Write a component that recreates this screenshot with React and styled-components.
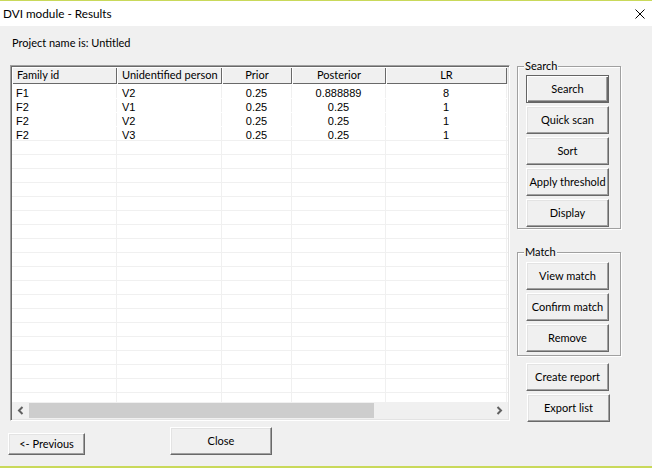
import React from "react";
import styled, { createGlobalStyle, css } from "styled-components";

const Global = createGlobalStyle`
  html, body { margin: 0; padding: 0; overflow: hidden; background: #f0f0f0; }
  * { box-sizing: border-box; }
`;

const UI = `Lato, "Noto Sans", sans-serif`;
const DATA = `"Liberation Sans", Arial, sans-serif`;

const Window = styled.div`
  width: 652px;
  height: 468px;
  display: flex;
  flex-direction: column;
  background: #f0f0f0;
  border-top: 1px solid #c9d95a;
  border-bottom: 2px solid #c9d95a;
  font-family: ${UI};
  font-size: 11px;
  color: #000;
`;

const TitleBar = styled.div`
  height: 25px;
  flex: none;
  background: #fff;
  display: flex;
  align-items: center;
  justify-content: space-between;
  padding: 0 6px 0 3px;
`;

const Title = styled.span`
  font-size: 11.75px;
  line-height: 16px;
`;

const CloseX = styled.svg`
  width: 10px;
  height: 10px;
  margin-right: 1px;
`;

const Body = styled.div`
  flex: 1;
  display: flex;
  flex-direction: column;
`;

const ProjectLabel = styled.div`
  padding: 10px 0 0 12px;
  line-height: 14px;
  height: 25px;
`;

const Main = styled.div`
  display: flex;
  gap: 7px;
  margin-top: 14px;
  padding-left: 10px;
`;

const TableFrame = styled.div`
  width: 500px;
  height: 356px;
  border: 1px solid;
  border-color: #a0a0a0 #fff #fff #a0a0a0;
  box-shadow: inset 1px 1px #696969, inset -1px -1px #e3e3e3;
  background: #fff;
  padding: 1px;
  display: flex;
  flex-direction: column;
`;

const HeaderRow = styled.div`
  display: flex;
  height: 17px;
  flex: none;
  background: #f0f0f0;
`;

const HeaderCell = styled.div`
  width: ${(p) => p.$w}px;
  flex: none;
  line-height: 16px;
  font-size: 11px;
  text-align: ${(p) => (p.$left ? "left" : "center")};
  padding-left: ${(p) => (p.$left ? 5 : 0)}px;
  box-shadow: inset 1px 1px #fff, inset -1px -1px #696969;
  background: #f0f0f0;
  white-space: nowrap;
  overflow: hidden;
`;

const HeaderFill = styled.div`
  flex: 1;
  background: #f0f0f0;
`;

const Grid = styled.div`
  flex: 1;
  overflow: hidden;
  background: #fff;
  padding-top: 1px;
`;

const Row = styled.div`
  display: flex;
  height: 14px;
  border-bottom: 1px solid ${(p) => (p.$data ? "#fff" : "#f0f0f0")};
`;

const Cell = styled.div`
  width: ${(p) => p.$w}px;
  flex: none;
  font-family: ${DATA};
  font-size: 11px;
  line-height: 16px;
  text-align: ${(p) => (p.$left ? "left" : "center")};
  padding-left: ${(p) => (p.$left ? p.$pad : 0)}px;
  border-right: 1px solid #f0f0f0;
  white-space: nowrap;
`;

const ScrollBar = styled.div`
  height: 17px;
  flex: none;
  display: flex;
  background: #f0f0f0;
`;

const ScrollArrow = styled.div`
  width: 17px;
  flex: none;
  display: flex;
  align-items: center;
  justify-content: center;
`;

const ScrollTrack = styled.div`
  flex: 1;
  display: flex;
  padding: 1px 0;
`;

const Thumb = styled.div`
  background: #cdcdcd;
  height: 100%;
`;

const Side = styled.div`
  width: 104px;
  flex: none;
  display: flex;
  flex-direction: column;
  padding-top: 1px;
`;

const Group = styled.div`
  position: relative;
  border: 1px solid #a0a0a0;
  box-shadow: inset 1px 1px #fff, 1px 1px #fff;
  padding: ${(p) => p.$pt}px 0 ${(p) => p.$pb}px 8px;
  margin-top: ${(p) => p.$mt || 0}px;
  display: flex;
  flex-direction: column;
  gap: 3px;
`;

const GroupLabel = styled.span`
  position: absolute;
  top: -9px;
  left: 6px;
  padding: 0 1px;
  background: #f0f0f0;
  line-height: 16px;
`;

const Button = styled.button`
  font-family: ${UI};
  font-size: 11px;
  color: #000;
  width: ${(p) => p.$w || 83}px;
  height: ${(p) => p.$h || 28}px;
  padding: 0 0 1px;
  margin: 0;
  margin-left: ${(p) => p.$ml || 0}px;
  margin-top: ${(p) => p.$mt || 0}px;
  background: #f0f0f0;
  border: 1px solid;
  border-color: #fff #696969 #696969 #fff;
  box-shadow: inset -1px -1px #a0a0a0, inset 1px 1px #e3e3e3;
  white-space: nowrap;
  flex: none;
  ${(p) =>
    p.$default &&
    css`
      border-color: #646464;
      box-shadow: inset 1px 1px #fff, inset -1px -1px #696969, inset -2px -2px #a0a0a0;
    `}
`;

const BottomRow = styled.div`
  display: flex;
  align-items: flex-start;
  margin-top: 5px;
`;

const cols = [
  { w: 105, left: true, pad: 4 },
  { w: 105, left: true, pad: 5 },
  { w: 70 },
  { w: 94 },
  { w: 121 },
];

const headers = ["Family id", "Unidentified person", "Prior", "Posterior", "LR"];

const data = [
  ["F1", "V2", "0.25", "0.888889", "8"],
  ["F2", "V1", "0.25", "0.25", "1"],
  ["F2", "V2", "0.25", "0.25", "1"],
  ["F2", "V3", "0.25", "0.25", "1"],
];

const Chevron = ({ dir }) => (
  <svg width="7" height="9" viewBox="0 0 7 9">
    <path
      d={dir === "left" ? "M5.5 1 L2 4.5 L5.5 8" : "M1.5 1 L5 4.5 L1.5 8"}
      fill="none"
      stroke="#606060"
      strokeWidth="2"
    />
  </svg>
);

export default function App() {
  const rows = [];
  for (let i = 0; i < 24; i++) {
    const r = data[i];
    rows.push(
      <Row key={i} $data={i < data.length - 1}>
        {cols.map((c, j) => (
          <Cell key={j} $w={c.w} $left={c.left} $pad={c.pad}>
            {r ? r[j] : ""}
          </Cell>
        ))}
      </Row>
    );
  }
  return (
    <>
      <Global />
      <Window>
        <TitleBar>
          <Title>DVI module - Results</Title>
          <CloseX viewBox="0 0 10 10">
            <path d="M0.5 0.5 L9.5 9.5 M9.5 0.5 L0.5 9.5" stroke="#000" strokeWidth="1" />
          </CloseX>
        </TitleBar>
        <Body>
          <ProjectLabel>Project name is: Untitled</ProjectLabel>
          <Main>
            <TableFrame>
              <HeaderRow>
                {cols.map((c, j) => (
                  <HeaderCell key={j} $w={c.w} $left={c.left}>
                    {headers[j]}
                  </HeaderCell>
                ))}
                <HeaderFill />
              </HeaderRow>
              <Grid>{rows}</Grid>
              <ScrollBar>
                <ScrollArrow>
                  <Chevron dir="left" />
                </ScrollArrow>
                <ScrollTrack>
                  <Thumb style={{ width: 345 }} />
                </ScrollTrack>
                <ScrollArrow>
                  <Chevron dir="right" />
                </ScrollArrow>
              </ScrollBar>
            </TableFrame>
            <Side>
              <Group $pt={8} $pb={1}>
                <GroupLabel>Search</GroupLabel>
                <Button $default>Search</Button>
                <Button>Quick scan</Button>
                <Button>Sort</Button>
                <Button>Apply threshold</Button>
                <Button>Display</Button>
              </Group>
              <Group $pt={9} $pb={3} $mt={23}>
                <GroupLabel>Match</GroupLabel>
                <Button>View match</Button>
                <Button>Confirm match</Button>
                <Button>Remove</Button>
              </Group>
              <Button $ml={9} $mt={7}>Create report</Button>
              <Button $ml={10} $mt={3}>Export list</Button>
            </Side>
          </Main>
          <BottomRow>
            <Button $w={77} $h={22} $ml={8} $mt={6}>&lt;- Previous</Button>
            <Button $w={102} $h={28} $ml={85}>Close</Button>
          </BottomRow>
        </Body>
      </Window>
    </>
  );
}
